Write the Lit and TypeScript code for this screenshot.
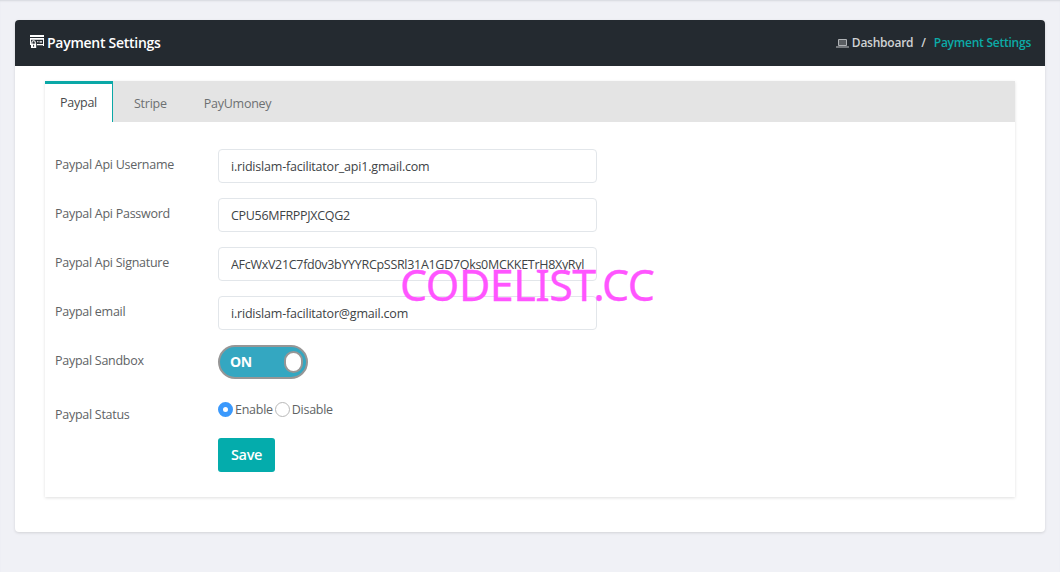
import { LitElement, html, css, svg } from "lit";
import { customElement, state } from "lit/decorators.js";

const fields = [
  { label: "Paypal Api Username", value: "i.ridislam-facilitator_api1.gmail.com" },
  { label: "Paypal Api Password", value: "CPU56MFRPPJXCQG2", token: true },
  { label: "Paypal Api Signature", value: "AFcWxV21C7fd0v3bYYYRCpSSRl31A1GD7Qks0MCKKETrH8XyRyl", token: true },
  { label: "Paypal email", value: "i.ridislam-facilitator@gmail.com" },
];

const cardIcon = svg`
  <path fill="#fff" d="M0 0h14v2H0zM0 3h14v1.700H0zM13 4h1v7h-1zM7 9h7v1.300H7z"/>
  <path fill="#fff" d="M0 4h1v6H0zM9.500 6.200H12v1.200H9.500zM7 6.200h1.500v1H7z"/>
  <path fill="none" stroke="#fff" stroke-width="1.100" d="M1.900 9V7.400a1.700 1.700 0 0 1 3.400 0V9"/>
  <path fill="#fff" d="M1 8.700h5.200V13H1z"/>
  <path fill="#242a30" d="M3.100 9.800h1v2h-1z"/>`;

@customElement("app-root")
export class AppRoot extends LitElement {
  @state() private tab = "Paypal";

  static styles = css`
    :host { display: block; }
    * { box-sizing: border-box; }
    .page {
      height: 572px; padding: 20px 15px 0; background: #f0f1f6; overflow: hidden;
      box-shadow: inset 0 2px 2px -1px #d5d7dd;
      font: 12.500px/20px "Open Sans", sans-serif; letter-spacing: -0.270px; color: #606365; white-space: nowrap;
    }
    .card { height: 512px; background: #fff; border-radius: 4px; box-shadow: 0 1px 3px rgba(0,0,0,.13); }
    .head {
      height: 46px; background: #242a30; border-radius: 4px 4px 0 0; padding: 0 14px 0 15px;
      display: flex; align-items: center; color: #fff;
    }
    .head > svg { margin-top: -3px; }
    .title { font-size: 14px; font-weight: 600; margin: 0 auto 0 3px; letter-spacing: -0.270px; }
    .crumbs { display: flex; align-items: center; font-size: 12px; font-weight: 600; color: #d0d2d4; letter-spacing: -0.240px; }
    .crumbs svg { margin-right: 3px; }
    .slash { margin: 0 8px; }
    .here { color: #0caaa7; }
    .panel { position: relative; margin: 15px 30px 0; height: 416px; box-shadow: 0 1px 3px rgba(0,0,0,.13); }
    .tabs { height: 41px; background: #e4e4e4; display: flex; }
    .tab {
      border: 0; background: none; font: inherit; letter-spacing: -0.250px; color: #6d7072;
      padding: 4px 16px 0 21px; cursor: pointer;
    }
    .tab.on {
      width: 68px; padding: 0; background: #fff; color: #484a4c;
      border-top: 3px solid #0aa8a7; border-right: 1px solid #0aa8a7;
    }
    .form { padding: 27px 10px 0; }
    .row { display: flex; height: 34px; margin-bottom: 15px; }
    .label { width: 163px; padding-top: 6px; }
    .input {
      width: 379px; height: 34px; border: 1px solid #e2e6ea; border-radius: 4px; padding: 0 12px;
      font: inherit; letter-spacing: -0.200px; color: #404346; background: #fff; outline: 0;
    }
    .input.token { letter-spacing: -0.300px; }
    .switch {
      width: 90px; height: 34px; border: 2px solid #969696; border-radius: 17px; background: #34a7c1;
      display: flex; align-items: center; justify-content: space-between; padding: 0 3px 0 10px;
      color: #fff; font-weight: 700; font-size: 14px;
    }
    .knob { width: 19px; height: 22px; border: 2px solid #969696; border-radius: 10px; background: #fff; }
    .status { margin-top: 20px; height: 20px; margin-bottom: 19px; }
    .radios { display: flex; align-items: center; height: 20px; }
    .radios span:not(.radio) { position: relative; top: 1px; }
    .radio { width: 15px; height: 15px; border-radius: 50%; border: 1px solid #b8b8b8; background: #fff; margin-right: 2px; }
    .radio.on { border: 5.500px solid #3b99fc; }
    .enable { margin-right: 2px; }
    .save {
      display: block; margin-left: 163px; width: 57px; height: 34px; border: 0; border-radius: 3px; background: #04acac; color: #fff;
      font: inherit; font-weight: 600; font-size: 14.500px; letter-spacing: -0.400px; padding: 0 0 1px;
    }
    .mark { position: absolute; left: 354px; top: 176px; pointer-events: none; overflow: visible; }
    .mark text { font: 43px "Noto Sans", sans-serif; letter-spacing: 0; fill: #ff55ff; stroke: #ff55ff; stroke-width: .3px; }
  `;

  render() {
    return html`<div class="page"><section class="card">
      <header class="head">
        <svg width="14" height="13" viewBox="0 0 14 13">${cardIcon}</svg>
        <span class="title">Payment Settings</span>
        <nav class="crumbs">
          <svg width="13" height="10" viewBox="0 0 13 10"><path fill="#5a5e62" stroke="#b0b3b6" d="M2.500 1.500h8v6h-8z"/><path fill="#c4c6c8" d="M0 8.500h13v1H0z"/></svg>
          <span>Dashboard</span><span class="slash">/</span><span class="here">Payment Settings</span>
        </nav>
      </header>
      <div class="panel">
        <div class="tabs">${["Paypal", "Stripe", "PayUmoney"].map(
          (t) => html`<button class="tab ${t === this.tab ? "on" : ""}" @click=${() => (this.tab = t)}>${t}</button>`
        )}</div>
        <div class="form">
          ${fields.map((f) => html`<div class="row"><span class="label">${f.label}</span><input class="input ${f.token ? "token" : ""}" .value=${f.value}></div>`)}
          <div class="row"><span class="label">Paypal Sandbox</span><div class="switch"><span>ON</span><span class="knob"></span></div></div>
          <div class="row status"><span class="label">Paypal Status</span>
            <div class="radios"><span class="radio on"></span><span class="enable">Enable</span><span class="radio"></span><span>Disable</span></div></div>
          <button class="save">Save</button>
        </div>
        <svg class="mark" width="260" height="56"><text x="1" y="44" textLength="255">CODELIST.CC</text></svg>
      </div>
    </section></div>`;
  }
}
